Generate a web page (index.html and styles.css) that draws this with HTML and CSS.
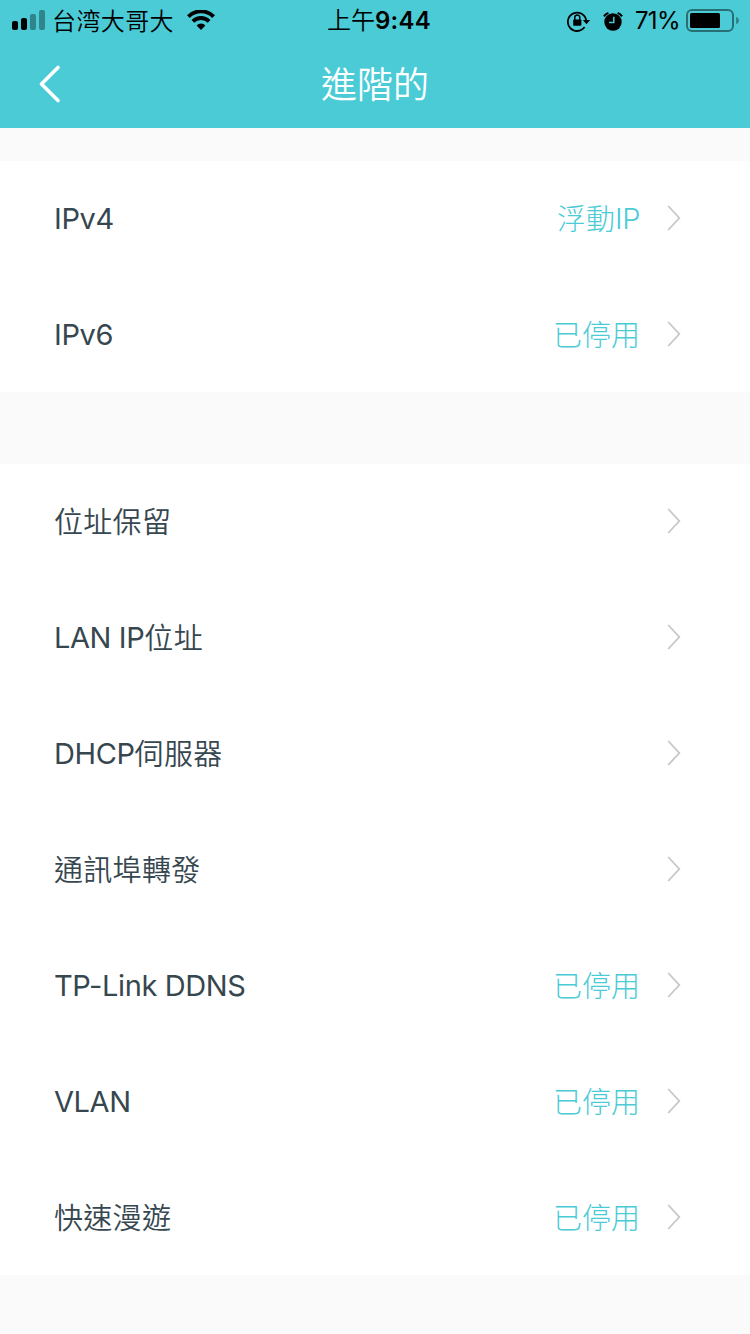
FILE: index.html
```html
<!DOCTYPE html>
<html lang="zh-Hant">
<head>
    <meta charset="UTF-8">
    <meta name="viewport" content="width=device-width, initial-scale=1.0">
    <title>進階的</title>
    <link rel="stylesheet" href="styles.css">
</head>
<body>
    <header class="header">
        <!-- 狀態列 -->
        <div class="status-bar">
            <div class="status-left">
                <svg class="signal" width="33" height="20" viewBox="0 0 33 20">
                    <rect x="0" y="11" width="6" height="9" rx="2"/>
                    <rect x="9" y="8" width="6" height="12" rx="2"/>
                    <rect class="dim" x="18" y="4" width="6" height="16" rx="2"/>
                    <rect class="dim" x="27" y="0" width="6" height="20" rx="2"/>
                </svg>
                <span class="carrier">台湾大哥大</span>
                <svg class="wifi" width="28" height="20" viewBox="0 0 28 20">
                    <path d="M1.4 6.6A17.8 17.8 0 0 1 26.6 6.6" fill="none" stroke="#000" stroke-width="4"/>
                    <path d="M5.9 11.4A11.4 11.4 0 0 1 22.1 11.4" fill="none" stroke="#000" stroke-width="3.8"/>
                    <path d="M9.6 15.4A6 6 0 0 1 18.4 15.4L14 20Z"/>
                </svg>
            </div>
            <div class="status-time">上午<b>9:44</b></div>
            <div class="status-right">
                <svg class="lock" width="24" height="22" viewBox="0 0 24 22">
                    <path d="M17.6 17.1A9.2 9.2 0 1 1 19.2 10.6" fill="none" stroke="#000" stroke-width="1.8"/>
                    <path d="M15.8 10H23.2L19.5 14.2Z"/>
                    <rect x="6.2" y="9.4" width="8.2" height="6.4" rx=".8"/>
                    <path d="M7.8 10V7.6A2.5 2.5 0 0 1 12.8 7.6V10" fill="none" stroke="#000" stroke-width="1.5"/>
                </svg>
                <svg class="alarm" width="20" height="20" viewBox="0 0 20 20">
                    <circle cx="10" cy="11" r="8.7"/>
                    <path d="M1 5.4A8 8 0 0 1 5.4 2M14.6 2A8 8 0 0 1 19 5.4" fill="none" stroke="#000" stroke-width="2.2"/>
                    <path d="M10.8 5.8V11.6H6" fill="none" stroke="#4acbd6" stroke-width="1.5"/>
                </svg>
                <span class="percent">71%</span>
                <svg class="battery" width="54" height="24" viewBox="0 0 54 24">
                    <rect x="1" y="1" width="46" height="21" rx="5" fill="none" stroke="#000" stroke-opacity=".45" stroke-width="2"/>
                    <rect x="4" y="4" width="30" height="15" rx="1.5"/>
                    <path class="cap" d="M50 8Q53 9 53 11.5T50 15Z"/>
                </svg>
            </div>
        </div>
        <!-- 標題列 -->
        <div class="nav-bar">
            <a href="#" class="back" aria-label="返回">
                <svg width="22" height="38" viewBox="0 0 22 38"><path d="M19 2.5L2.5 19L19 35.5"/></svg>
            </a>
            <h1>進階的</h1>
        </div>
    </header>

    <ul class="list">
        <li><span class="label en">IPv4</span><span class="value">浮動<span class="en">IP</span></span></li>
        <li><span class="label en">IPv6</span><span class="value">已停用</span></li>
    </ul>

    <ul class="list">
        <li><span class="label">位址保留</span></li>
        <li><span class="label"><span class="en">LAN IP</span>位址</span></li>
        <li><span class="label"><span class="en">DHCP</span>伺服器</span></li>
        <li><span class="label">通訊埠轉發</span></li>
        <li><span class="label en">TP-Link DDNS</span><span class="value">已停用</span></li>
        <li><span class="label en">VLAN</span><span class="value">已停用</span></li>
        <li><span class="label">快速漫遊</span><span class="value">已停用</span></li>
    </ul>

    <script>
        // 每一列右側的箭頭
        document.querySelectorAll(".list li").forEach(row => {
            row.insertAdjacentHTML("beforeend",
                '<svg class="arrow" width="14" height="26" viewBox="0 0 14 26"><path d="M1.2 1L12.3 13L1.2 25"/></svg>');
        });
    </script>
</body>
</html>
```

FILE: styles.css
```css
* {
    box-sizing: border-box;
}

body {
    margin: 0;
    min-height: 1334px;
    background: #fafafa;
    color: #36474f;
    font-family: Inter, "Noto Sans CJK TC", sans-serif;
}

svg {
    display: block;
    flex: none;
}

.header {
    height: 128px;
    background: #4acbd6;
}

/* 狀態列 */
.status-bar {
    height: 40px;
    display: grid;
    grid-template-columns: 1fr auto 1fr;
    align-items: center;
    padding: 0 10px 0 12px;
    color: #000;
    font-size: 24px;
    line-height: 38px;
    white-space: nowrap;
}

.status-left,
.status-right {
    display: flex;
    align-items: center;
}

.status-right {
    justify-content: flex-end;
    padding-top: 2px;
}

.carrier {
    margin: 0 13px 0 7px;
    font-family: "Noto Sans CJK SC", sans-serif;
    font-weight: 350;
    letter-spacing: 0.4px;
}

.dim,
.cap {
    opacity: 0.35;
}

.status-time {
    padding: 2px 0 0 6px;
    font-weight: 350;
}

.status-time b {
    font-weight: 600;
    letter-spacing: 0.3px;
}

.alarm {
    margin: 0 12px;
}

.percent {
    margin-right: 6px;
    letter-spacing: -0.6px;
}

/* 標題列 */
.nav-bar {
    height: 88px;
    display: grid;
    grid-template-columns: 100px 1fr 100px;
    align-items: center;
}

.back {
    padding-left: 39px;
}

.back path {
    fill: none;
    stroke: #fff;
    stroke-width: 3.6;
    stroke-linecap: round;
    stroke-linejoin: round;
}

h1 {
    margin: 0;
    padding-top: 2px;
    color: #fff;
    font-size: 36px;
    font-weight: 350;
    line-height: 86px;
    text-align: center;
}

/* 設定清單 */
.list {
    margin: 33px 0 0;
    padding: 0;
    list-style: none;
    background: #fff;
}

.list + .list {
    margin-top: 72px;
}

.list li {
    height: 116px;
    display: flex;
    align-items: center;
    padding: 0 69px 0 54px;
    font-size: 29px;
    line-height: 40px;
}

.list li:first-child {
    height: 115px;
    padding-bottom: 1px;
}

.label,
.value {
    padding-top: 4px;
}

.label {
    font-weight: 350;
    letter-spacing: 0.3px;
}

.en {
    font-weight: 400;
    letter-spacing: -0.4px;
}

.label.en {
    padding-top: 2px;
}

/* 中英混排時英文略高 */
.label .en,
.value .en {
    vertical-align: 1px;
    line-height: 1;
}

.value {
    margin-left: auto;
    color: #4acbd6;
    font-weight: 300;
}

.value .en {
    font-weight: 300;
}

.arrow {
    margin-left: auto;
}

.value + .arrow {
    margin-left: 27px;
}

.arrow path {
    fill: none;
    stroke: #c7c7c7;
    stroke-width: 1.8;
}
```
